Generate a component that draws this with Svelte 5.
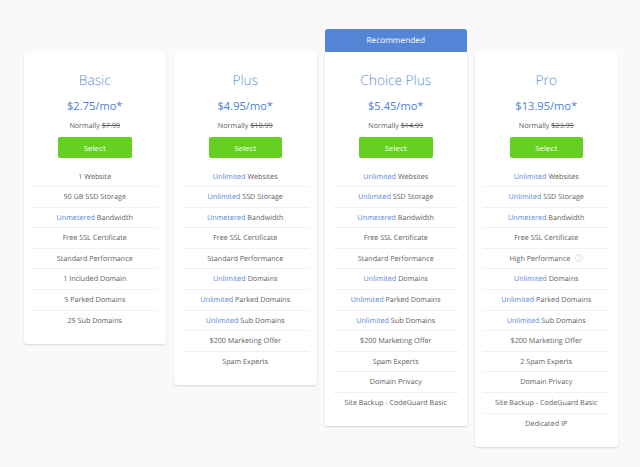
<script>
	const u = (t) => ({ hi: 'Unlimited', rest: ' ' + t });
	const m = { hi: 'Unmetered', rest: ' Bandwidth' };
	const p = (t) => ({ rest: t });

	const plans = [
		{
			name: 'Basic',
			price: '$2.75/mo*',
			normal: '$7.99',
			rows: [
				p('1 Website'),
				p('50 GB SSD Storage'),
				m,
				p('Free SSL Certificate'),
				p('Standard Performance'),
				p('1 Included Domain'),
				p('5 Parked Domains'),
				p('25 Sub Domains')
			]
		},
		{
			name: 'Plus',
			price: '$4.95/mo*',
			normal: '$10.99',
			rows: [
				u('Websites'),
				u('SSD Storage'),
				m,
				p('Free SSL Certificate'),
				p('Standard Performance'),
				u('Domains'),
				u('Parked Domains'),
				u('Sub Domains'),
				p('$200 Marketing Offer'),
				p('Spam Experts')
			]
		},
		{
			name: 'Choice Plus',
			price: '$5.45/mo*',
			normal: '$14.99',
			recommended: true,
			rows: [
				u('Websites'),
				u('SSD Storage'),
				m,
				p('Free SSL Certificate'),
				p('Standard Performance'),
				u('Domains'),
				u('Parked Domains'),
				u('Sub Domains'),
				p('$200 Marketing Offer'),
				p('Spam Experts'),
				p('Domain Privacy'),
				p('Site Backup - CodeGuard Basic')
			]
		},
		{
			name: 'Pro',
			price: '$13.95/mo*',
			normal: '$23.99',
			rows: [
				u('Websites'),
				u('SSD Storage'),
				m,
				p('Free SSL Certificate'),
				{ rest: 'High Performance', info: true },
				u('Domains'),
				u('Parked Domains'),
				u('Sub Domains'),
				p('$200 Marketing Offer'),
				p('2 Spam Experts'),
				p('Domain Privacy'),
				p('Site Backup - CodeGuard Basic'),
				p('Dedicated IP')
			]
		}
	];
</script>

<div class="page">
	{#each plans as plan}
		<div class="card">
			{#if plan.recommended}
				<div class="badge">Recommended</div>
			{/if}
			<h2>{plan.name}</h2>
			<div class="price">{plan.price}</div>
			<div class="normal">Normally <s>{plan.normal}</s></div>
			<button>Select</button>
			<ul>
				{#each plan.rows as row}
					<li>
						{#if row.hi}<span class="hi">{row.hi}</span>{/if}{row.rest}
						{#if row.info}
							<svg class="info" width="8" height="8" viewBox="0 0 9 9">
								<circle cx="4.5" cy="4.5" r="3.9" fill="none" stroke="#d5d8dc" stroke-width="0.9" />
								<path d="M4.5 4v2.4M4.5 2.4v.8" stroke="#d5d8dc" stroke-width="0.9" />
							</svg>
						{/if}
					</li>
				{/each}
			</ul>
		</div>
	{/each}
</div>

<style>
	:global(body) {
		background: #f9f9f9;
		font-family: 'Open Sans', sans-serif;
		text-rendering: geometricPrecision;
	}
	.page {
		display: flex;
		align-items: flex-start;
		gap: 8px;
		padding: 52px 0 0 23.5px;
		height: 415px;
		overflow: hidden;
	}
	.card {
		position: relative;
		width: 142.5px;
		flex: none;
		box-sizing: border-box;
		background: #fff;
		border-radius: 3px;
		padding: 20px 8px 12.5px;
		text-align: center;
		box-shadow: 0 1px 2px rgba(0, 0, 0, 0.14);
	}
	.badge {
		position: absolute;
		left: 0;
		right: 0;
		bottom: 100%;
		height: 23px;
		line-height: 23px;
		background: #5585d6;
		border-radius: 3px 3px 0 0;
		color: #fff;
		font-size: 8.3px;
	}
	h2 {
		margin: 0;
		font-size: 13.7px;
		line-height: 18px;
		font-weight: 300;
		color: #5f8fdc;
	}
	.price {
		margin-top: 8px;
		font-size: 11.1px;
		line-height: 18px;
		color: #4f80d5;
	}
	.normal {
		margin-top: 3.5px;
		font-size: 7.2px;
		line-height: 12px;
		color: #5c5c5c;
	}
	button {
		display: block;
		width: 73.5px;
		height: 21px;
		margin: 5px auto 0;
		padding: 0;
		border: none;
		border-radius: 2px;
		background: #65cf22;
		color: #fff;
		font-family: inherit;
		font-size: 8px;
	}
	ul {
		list-style: none;
		margin: 9px 0 0;
		padding: 0;
	}
	li {
		height: 20.6px;
		line-height: 20px;
		box-sizing: border-box;
		font-size: 7.2px;
		color: #5c5c5c;
		border-bottom: 1px solid #f0f1f2;
		white-space: nowrap;
	}
	li:last-child {
		border-bottom: none;
	}
	.hi {
		color: #5585d6;
	}
	.info {
		margin-left: 3px;
		vertical-align: -1px;
	}
</style>
